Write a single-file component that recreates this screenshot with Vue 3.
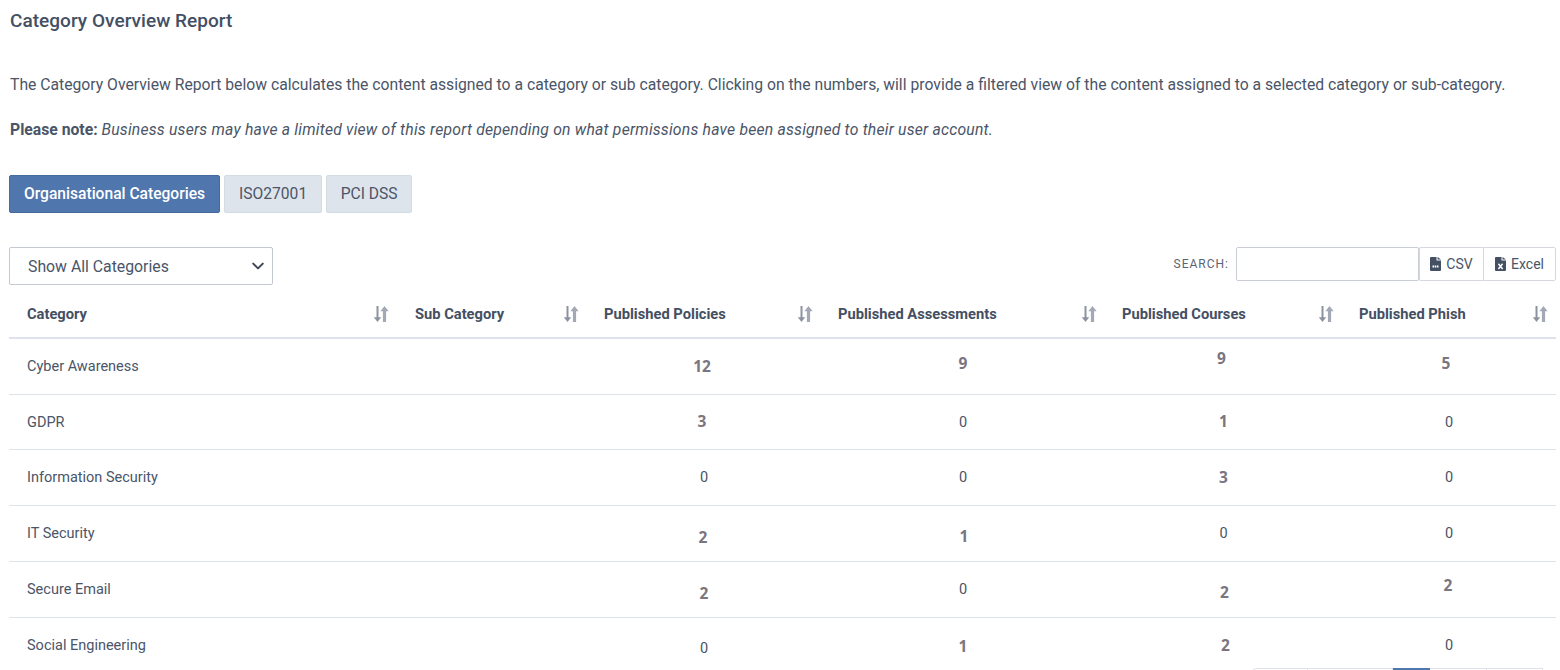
<script setup>
const columns = [
  { label: 'Category', width: 389 },
  { label: 'Sub Category', width: 189 },
  { label: 'Published Policies', width: 234 },
  { label: 'Published Assessments', width: 284 },
  { label: 'Published Courses', width: 237 },
  { label: 'Published Phish', width: 214 }
]

// each count is [value, nudgeX, nudgeY] - the numbers sit a little off centre in the report
const rows = [
  { name: 'Cyber Awareness', counts: [[12, -2, 0], [9, 0, -3], [9, -2, -8], [5, -3, -3]] },
  { name: 'GDPR', counts: [[3, -2, -1], [0, 0, 0], [1, 0, -1], [0, 0, 0]] },
  { name: 'Information Security', counts: [[0, 0, 0], [0, 0, 0], [3, 0, 0], [0, 0, 0]] },
  { name: 'IT Security', counts: [[2, -1, 4], [1, 1, 3], [0, 0, 0], [0, 0, 0]] },
  { name: 'Secure Email', counts: [[2, 0, 4], [0, 0, 0], [2, 1, 3], [2, -1, -4]] },
  { name: 'Social Engineering', counts: [[0, 0, 3], [1, 0, 1], [2, 2, 0], [0, 0, 0]] }
]

const tabs = ['Organisational Categories', 'ISO27001', 'PCI DSS']
const pages = [56, 85, 37, 57, 56]
</script>

<template>
  <div class="page">
    <h1 class="title">Category Overview Report</h1>
    <p class="intro">
      The Category Overview Report below calculates the content assigned to a category or sub category. Clicking on the numbers, will provide a filtered view of the content assigned to a selected category or sub-category.
    </p>
    <p class="note">
      <strong>Please note:</strong> <em>Business users may have a limited view of this report depending on what permissions have been assigned to their user account.</em>
    </p>

    <div class="tabs">
      <button v-for="(tab, i) in tabs" :key="tab" class="tab" :class="{ active: i === 0 }">{{ tab }}</button>
    </div>

    <div class="toolbar">
      <div class="select">
        <span>Show All Categories</span>
        <svg width="14" height="14" viewBox="0 0 14 14">
          <path d="M2.2 4.6 7 9.4 11.8 4.6" fill="none" stroke="#3f4656" stroke-width="2" stroke-linecap="round" stroke-linejoin="round" />
        </svg>
      </div>
      <div class="tools">
        <label class="search-label">SEARCH:</label>
        <input class="search" type="text" />
        <div class="export">
          <button class="export-btn csv">
            <svg width="11" height="14" viewBox="0 0 11 14">
              <path d="M0 1a1 1 0 0 1 1-1h5.5v3.5H11V13a1 1 0 0 1-1 1H1a1 1 0 0 1-1-1zM7.5 0 11 2.6H7.5z" fill="#444f63" />
              <path d="M2.5 9.5h6" stroke="#fff" stroke-width="2" stroke-dasharray="1.6 .6" />
            </svg>
            CSV
          </button>
          <button class="export-btn excel">
            <svg width="11" height="14" viewBox="0 0 11 14">
              <path d="M0 1a1 1 0 0 1 1-1h5.5v3.5H11V13a1 1 0 0 1-1 1H1a1 1 0 0 1-1-1zM7.5 0 11 2.6H7.5z" fill="#444f63" />
              <path d="M3.4 6.8 7.6 12M7.6 6.8 3.4 12" stroke="#fff" stroke-width="1.5" />
            </svg>
            Excel
          </button>
        </div>
      </div>
    </div>

    <table class="report">
      <colgroup>
        <col v-for="col in columns" :key="col.label" :style="{ width: col.width + 'px' }" />
      </colgroup>
      <thead>
        <tr>
          <th v-for="col in columns" :key="col.label">
            <div class="th-inner">
              <span>{{ col.label }}</span>
              <svg class="sort" width="16" height="18" viewBox="0 0 16 18">
                <path d="M4.5 1v13" fill="none" stroke="#8c93a0" stroke-width="2" />
                <path d="M.8 12.2h7.4L4.5 17z" fill="#8c93a0" />
                <path d="M11.5 17V4" fill="none" stroke="#a3a9b4" stroke-width="3.2" />
                <path d="M7.4 6.2h8.2L11.5 1z" fill="#a3a9b4" />
              </svg>
            </div>
          </th>
        </tr>
      </thead>
      <tbody>
        <tr v-for="row in rows" :key="row.name">
          <td class="name">{{ row.name }}</td>
          <td></td>
          <td v-for="(count, i) in row.counts" :key="i" class="num">
            <a v-if="count[0] > 0" class="count" :style="{ transform: `translate(${count[1]}px, ${count[2]}px)` }">{{ count[0] }}</a>
            <span v-else class="zero" :style="{ transform: `translate(${count[1]}px, ${count[2]}px)` }">0</span>
          </td>
        </tr>
      </tbody>
    </table>

    <div class="pager">
      <span v-for="(w, i) in pages" :key="i" class="page-btn" :class="{ current: i === 2 }" :style="{ width: w + 'px' }"></span>
    </div>
  </div>
</template>

<style>
html, body {
  overflow: hidden;
  background: #fff;
}
</style>

<style scoped>
.page {
  height: 670px;
  overflow: hidden;
  box-sizing: border-box;
  padding: 9px 4px 0 9px;
  font-family: Roboto, "Liberation Sans", sans-serif;
  color: #4a5568;
}
.title {
  margin: 0 0 0 1px;
  font-size: 19px;
  line-height: 24px;
  font-weight: 500;
  letter-spacing: 0.04px;
  color: #444f63;
}
.intro {
  margin: 41px 0 0 1px;
  font-size: 15.72px;
  line-height: 22px;
  white-space: nowrap;
}
.note {
  margin: 23px 0 0 1px;
  font-size: 15.72px;
  line-height: 22px;
  white-space: nowrap;
}
.note strong {
  font-weight: 700;
}
.note em {
  letter-spacing: 0.21px;
}
.tabs {
  display: flex;
  gap: 4px;
  margin-top: 34px;
}
.tab {
  height: 38px;
  box-sizing: border-box;
  padding: 0 14px;
  font: 400 15.6px Roboto, sans-serif;
  color: #4a5568;
  background: #dee4ec;
  border: 1px solid #d3dbe5;
  border-radius: 2px;
}
.tab:last-child {
  padding: 0 13.5px;
}
.tab.active {
  font-weight: 500;
  color: #fff;
  background: #4f76ad;
  border-color: #456a9e;
}
.toolbar {
  display: flex;
  justify-content: space-between;
  align-items: flex-start;
  margin-top: 34px;
}
.select {
  width: 264px;
  height: 38px;
  box-sizing: border-box;
  display: flex;
  align-items: center;
  justify-content: space-between;
  padding: 0 7px 0 18px;
  font-size: 15.8px;
  color: #4a5568;
  border: 1px solid #c3c8d2;
  border-radius: 2px;
}
.tools {
  display: flex;
  align-items: center;
}
.search-label {
  font-size: 12px;
  letter-spacing: 1px;
  color: #5a6474;
  margin-right: 7px;
}
.search {
  width: 183px;
  height: 34px;
  box-sizing: border-box;
  border: 1px solid #c9cdd6;
  border-radius: 2px;
  padding: 0;
  outline: none;
}
.export {
  display: flex;
}
.export-btn {
  height: 34px;
  box-sizing: border-box;
  display: flex;
  align-items: center;
  justify-content: center;
  gap: 5px;
  font: 400 14px Roboto, sans-serif;
  color: #4a5568;
  background: #fff;
  border: 1px solid #d5d8df;
}
.export-btn.csv {
  width: 64px;
  border-right: 0;
  border-radius: 2px 0 0 2px;
}
.export-btn.excel {
  width: 73px;
  border-radius: 0 2px 2px 0;
}
.report {
  width: 1547px;
  table-layout: fixed;
  border-collapse: collapse;
  margin-top: 5px;
  font-size: 14.5px;
}
.report th {
  height: 48px;
  box-sizing: border-box;
  padding: 0 8px 0 17px;
  font-size: 14.7px;
  font-weight: 700;
  text-align: left;
  color: #444f63;
  border-bottom: 2px solid #dee2ea;
}
.report th:first-child {
  padding-right: 9px;
}
.report th:first-child,
.report td.name {
  padding-left: 18px;
}
.th-inner {
  display: flex;
  align-items: center;
  justify-content: space-between;
}
.report td {
  height: 56px;
  box-sizing: border-box;
  padding: 0;
  border-bottom: 1px solid #dee2ea;
}
.report tbody tr:nth-child(2) td {
  height: 55px;
  padding-top: 1px;
}
.report tbody tr:last-child td {
  border-bottom: 0;
}
.report td.num {
  text-align: center;
}
.count,
.zero {
  display: inline-block;
}
.count {
  font-family: "Open Sans", sans-serif;
  font-size: 15.5px;
  font-weight: 700;
  color: #7a757f;
}
.pager {
  display: flex;
  margin: -5px 0 0 1243px;
  width: 291px;
}
.page-btn {
  height: 20px;
  box-sizing: border-box;
  border: 1px solid #dee2ea;
  border-left: 0;
}
.page-btn:first-child {
  border-left: 1px solid #dee2ea;
  border-radius: 4px 0 0 0;
}
.page-btn.current {
  background: #4f76ad;
  border-color: #4f76ad;
}
</style>
